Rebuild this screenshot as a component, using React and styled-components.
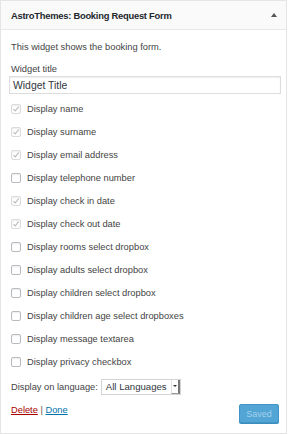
import React from "react";
import styled, { createGlobalStyle } from "styled-components";

const Global = createGlobalStyle`
  html, body { margin: 0; padding: 0; background: #fff; }
  body { font-family: "Liberation Sans", Arial, sans-serif; color: #444; }
  * { box-sizing: border-box; }
`;

const Card = styled.div`
  width: 287px;
  height: 434px;
  border: 1px solid #e5e5e5;
  background: #fff;
  display: flex;
  flex-direction: column;
`;

const Header = styled.div`
  height: 29px;
  flex: none;
  display: flex;
  align-items: center;
  justify-content: space-between;
  padding: 0 9px 0 10px;
  background: #fafafa;
  border-bottom: 1px solid #e8e8e8;
`;

const Title = styled.div`
  font-size: 9.4px;
  font-weight: bold;
  letter-spacing: -0.25px;
  color: #23282d;
`;

const Toggle = styled.span`
  width: 0;
  height: 0;
  border-left: 3px solid transparent;
  border-right: 3px solid transparent;
  border-bottom: 4px solid #555;
`;

const Body = styled.div`
  padding: 10px 6px 10px 10px;
  display: flex;
  flex-direction: column;
  flex: 1;
  font-size: 9.3px;
`;

const Text = styled.div`
  line-height: 14px;
  margin-bottom: ${(p) => p.$mb || 0}px;
  white-space: nowrap;
`;

const Input = styled.div`
  margin-left: -2px;
  width: 272px;
  height: 18px;
  border: 1px solid #ddd;
  box-shadow: inset 0 1px 2px rgba(0, 0, 0, 0.07);
  font-size: 10.4px;
  color: #32373c;
  padding-left: 3px;
  display: flex;
  align-items: center;
`;

const List = styled.div`
  margin-top: 3px;
  display: flex;
  flex-direction: column;
`;

const Row = styled.div`
  height: 23px;
  display: flex;
  align-items: center;
  gap: 6px;
  white-space: nowrap;
`;

const Box = styled.span`
  width: 10px;
  height: 10px;
  border-radius: 2px;
  border: 1px solid ${(p) => (p.$checked ? "#dcdcdc" : "#b8bcc0")};
  box-shadow: inset 0 1px 2px rgba(0, 0, 0, 0.08);
  background: #fff;
  display: flex;
  align-items: center;
  justify-content: center;
  flex: none;
`;

const LangRow = styled.div`
  height: 27px;
  display: flex;
  align-items: center;
  gap: 3px;
  white-space: nowrap;
`;

const Select = styled.div`
  width: 80px;
  height: 16px;
  border: 1px solid #d4d4d4;
  background: #fff;
  display: flex;
  align-items: center;
  justify-content: space-between;
  font-size: 9.6px;
  color: #32373c;
  padding-left: 4px;
  white-space: nowrap;
`;

const Caret = styled.span`
  width: 9px;
  height: 14px;
  border-left: 1px solid #e2e2e2;
  border-right: 2px solid #777;
  border-bottom: 1px solid #999;
  display: flex;
  align-items: center;
  justify-content: center;
  flex: none;
  &::after {
    content: "";
    border-left: 2px solid transparent;
    border-right: 2px solid transparent;
    border-top: 2px solid #333;
  }
`;

const Footer = styled.div`
  margin-top: 4px;
  display: flex;
  justify-content: space-between;
  align-items: flex-start;
`;

const Links = styled.div`
  margin-top: -1px;
  line-height: 14px;
  color: #555;
`;

const Link = styled.a`
  color: ${(p) => (p.$danger ? "#a00" : "#0073aa")};
  text-decoration: underline;
`;

const Button = styled.button`
  width: 40px;
  height: 19px;
  margin-right: 1px;
  padding: 0;
  border: 1px solid #3f95c6;
  border-radius: 2px;
  background: #52a5d5;
  color: #a4d1ec;
  font-family: inherit;
  font-size: 9px;
  box-shadow: 0 1px 0 #3f8dbd;
`;

const Check = () => (
  <svg width="8" height="8" viewBox="0 0 8 8">
    <path d="M1.5 4.2 L3.2 6 L6.6 1.6" fill="none" stroke="#b9b9b9" strokeWidth="1.1" />
  </svg>
);

const options = [
  ["Display name", true],
  ["Display surname", true],
  ["Display email address", true],
  ["Display telephone number", false],
  ["Display check in date", true],
  ["Display check out date", true],
  ["Display rooms select dropbox", false],
  ["Display adults select dropbox", false],
  ["Display children select dropbox", false],
  ["Display children age select dropboxes", false],
  ["Display message textarea", false],
  ["Display privacy checkbox", false],
];

export default function App() {
  return (
    <>
      <Global />
      <Card>
        <Header>
          <Title>AstroThemes: Booking Request Form</Title>
          <Toggle />
        </Header>
        <Body>
          <Text $mb={8}>This widget shows the booking form.</Text>
          <Text>Widget title</Text>
          <Input>Widget Title</Input>
          <List>
            {options.map(([label, checked]) => (
              <Row key={label}>
                <Box $checked={checked}>{checked && <Check />}</Box>
                <span>{label}</span>
              </Row>
            ))}
          </List>
          <LangRow>
            <span>Display on language:</span>
            <Select>
              <span>All Languages</span>
              <Caret />
            </Select>
          </LangRow>
          <Footer>
            <Links>
              <Link $danger href="#">Delete</Link> | <Link href="#">Done</Link>
            </Links>
            <Button>Saved</Button>
          </Footer>
        </Body>
      </Card>
    </>
  );
}
